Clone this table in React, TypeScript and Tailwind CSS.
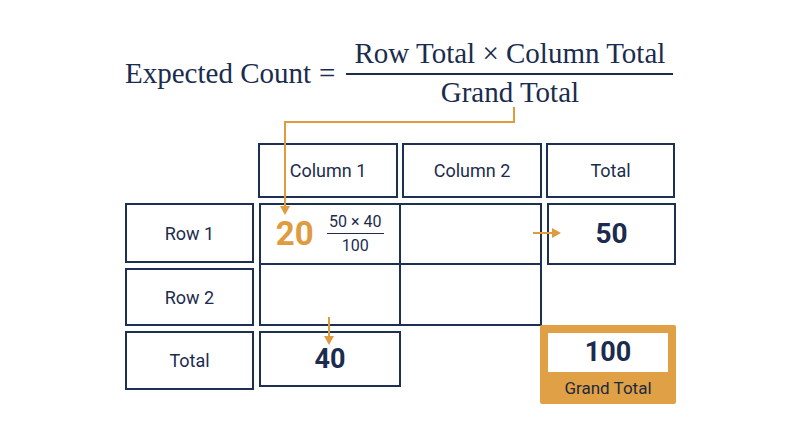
import type { ReactNode } from 'react';

const NAVY = 'border-[#1d3054]';

function Box({ className = '', children }: { className?: string; children?: ReactNode }) {
  return (
    <div className={`flex shrink-0 items-center justify-center border-2 ${NAVY} ${className}`}>
      {children}
    </div>
  );
}

function Arrows() {
  const c = '#e09b3f';
  return (
    <svg className="pointer-events-none absolute left-0 top-0" width="800" height="447">
      <polyline points="514,107 514,122 285,122 285,207" fill="none" stroke={c} strokeWidth="2" />
      <polygon points="280,206 290,206 285,215" fill={c} />
      <line x1="533" y1="233" x2="553" y2="233" stroke={c} strokeWidth="2" />
      <polygon points="552,228 552,238 561,233" fill={c} />
      <line x1="329" y1="317" x2="329" y2="337" stroke={c} strokeWidth="2" />
      <polygon points="324,336 334,336 329,345" fill={c} />
    </svg>
  );
}

export default function App() {
  return (
    <div className="relative h-[447px] w-[800px] overflow-hidden bg-white font-['Roboto',sans-serif] text-[#1b2c4e]">
      {/* formula */}
      <div className="flex items-center pl-[125px] pt-[39px] font-['Liberation_Serif',serif] text-[29px] leading-none">
        <span>Expected Count</span>
        <span className="ml-[8px] mr-[11px]">=</span>
        <div className="flex w-[327px] flex-col items-center">
          <div className="pb-[5px]">Row Total × Column Total</div>
          <div className="h-[2px] w-full bg-[#1b2c4e]" />
          <div className="pt-[3px]">Grand Total</div>
        </div>
      </div>

      {/* table */}
      <div className="ml-[125px] mt-[36px] flex flex-col text-[18px]">
        <div className="flex">
          <div className="w-[133px] shrink-0" />
          <Box className="h-[55px] w-[140px]">Column 1</Box>
          <Box className="ml-[4px] h-[55px] w-[140px]">Column 2</Box>
          <Box className="ml-[4px] h-[55px] w-[129px]">Total</Box>
        </div>

        <div className="mt-[5px] flex">
          <div className="flex w-[129px] shrink-0 flex-col gap-[5px]">
            <Box className="h-[60px]">Row 1</Box>
            <Box className="h-[58px]">Row 2</Box>
          </div>
          <div className={`ml-[5px] grid h-[123px] w-[283px] shrink-0 grid-cols-2 grid-rows-2 border-2 ${NAVY}`}>
            <div className={`flex items-center justify-center gap-[13px] border-b-2 border-r-2 ${NAVY}`}>
              <span className="text-[33px] font-bold leading-none text-[#e09b3f]">20</span>
              <div className="flex flex-col items-center text-[16px] leading-none">
                <span className="pb-[3px]">50 × 40</span>
                <span className="h-px w-[57px] bg-[#1b2c4e]" />
                <span className="pt-[4px]">100</span>
              </div>
            </div>
            <div className={`border-b-2 ${NAVY}`} />
            <div className={`border-r-2 ${NAVY}`} />
            <div />
          </div>
          <Box className="ml-[5px] h-[62px] w-[129px] text-[28px] font-bold">50</Box>
        </div>

        <div className="mt-[5px] flex items-start">
          <Box className="h-[59px] w-[129px]">Total</Box>
          <Box className="ml-[5px] h-[56px] w-[142px] text-[27px] font-bold">40</Box>
          <div className="-mt-[6px] ml-[139px] flex h-[79px] w-[136px] shrink-0 flex-col items-center rounded-[2px] bg-[#e0a046] px-[8px] pt-[8px]">
            <div className="flex h-[39px] w-full items-center justify-center bg-white text-[27px] font-bold">100</div>
            <div className="pt-[8px] text-[17px] leading-none text-[#1d2a3e]">Grand Total</div>
          </div>
        </div>
      </div>

      <Arrows />
    </div>
  );
}
